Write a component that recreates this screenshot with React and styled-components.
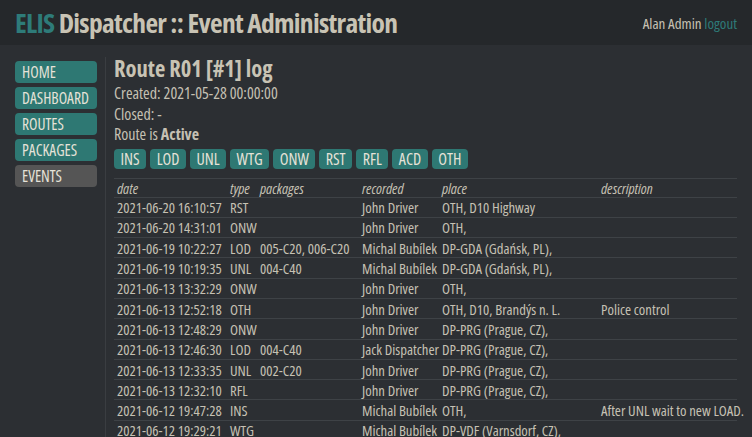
import React from "react";
import styled, { createGlobalStyle } from "styled-components";

const Global = createGlobalStyle`
  html, body {
    margin: 0;
    padding: 0;
    background: #2c2f33;
  }
  body {
    font-family: "Open Sans", "Roboto", sans-serif;
    font-stretch: 75%;
    color: #c6c1b3;
  }
`;

const Page = styled.div`
  width: 752px;
  height: 437px;
  overflow: hidden;
  background: #2c2f33;
`;

const Header = styled.header`
  height: 45px;
  background: #25282b;
  display: flex;
  align-items: center;
  justify-content: space-between;
  padding: 0 15px 0 15px;
  box-sizing: border-box;
`;

const Title = styled.h1`
  margin: 0;
  font-size: 27.5px;
  font-weight: 700;
  letter-spacing: -0.7px;
  color: #c8c3b4;
`;

const Brand = styled.span`
  color: #2e7b79;
`;

const User = styled.div`
  font-size: 15px;
  color: #c6c1b3;
`;

const Logout = styled.a`
  color: #2e7b79;
  text-decoration: none;
`;

const Body = styled.div`
  display: flex;
  height: calc(100% - 45px);
`;

const Side = styled.nav`
  width: 106px;
  box-sizing: border-box;
  margin-top: 12px;
  padding: 4px 8px 0 15px;
  border-right: 1px solid #3a3d41;
  display: flex;
  flex-direction: column;
  gap: 4px;
`;

const NavButton = styled.div`
  height: 22px;
  line-height: 22px;
  border-radius: 4px;
  padding-left: 7px;
  font-size: 15.5px;
  color: #e6e2d8;
  background: ${(p) => (p.$active ? "#555555" : "#2e7873")};
`;

const Main = styled.main`
  flex: 1;
  padding: 12px 15px 0 8px;
  min-width: 0;
`;

const Heading = styled.h2`
  margin: 0 0 2px 0;
  font-size: 22.5px;
  font-weight: 700;
  line-height: 24px;
  color: #c8c3b4;
`;

const Info = styled.div`
  font-size: 16px;
  line-height: 20.5px;
`;

const Actions = styled.div`
  display: flex;
  gap: 4px;
  margin-top: 4px;
`;

const Action = styled.div`
  height: 20px;
  line-height: 20px;
  padding: 0 6.5px;
  border-radius: 4px;
  background: #2e7873;
  color: #e6e2d8;
  font-size: 16px;
`;

const Table = styled.table`
  margin-top: 9px;
  width: 623px;
  table-layout: fixed;
  border-collapse: collapse;
  font-size: 14.7px;
  line-height: 18px;
  border-top: 1px solid #3e4246;
`;

const Th = styled.th`
  text-align: left;
  font-weight: normal;
  font-style: italic;
  padding: 0 3px;
  height: 18.5px;
  border-bottom: 1px solid #3e4246;
  width: ${(p) => p.$w || "auto"};
  box-sizing: border-box;
`;

const Td = styled.td`
  padding: 0 3px;
  height: 19.3px;
  border-bottom: 1px solid #3e4246;
  white-space: nowrap;
`;

const rows = [
  ["2021-06-20 16:10:57", "RST", "", "John Driver", "OTH, D10 Highway", ""],
  ["2021-06-20 14:31:01", "ONW", "", "John Driver", "OTH,", ""],
  ["2021-06-19 10:22:27", "LOD", "005-C20, 006-C20", "Michal Bubílek", "DP-GDA (Gdańsk, PL),", ""],
  ["2021-06-19 10:19:35", "UNL", "004-C40", "Michal Bubílek", "DP-GDA (Gdańsk, PL),", ""],
  ["2021-06-13 13:32:29", "ONW", "", "John Driver", "OTH,", ""],
  ["2021-06-13 12:52:18", "OTH", "", "John Driver", "OTH, D10, Brandýs n. L.", "Police control"],
  ["2021-06-13 12:48:29", "ONW", "", "John Driver", "DP-PRG (Prague, CZ),", ""],
  ["2021-06-13 12:46:30", "LOD", "004-C40", "Jack Dispatcher", "DP-PRG (Prague, CZ),", ""],
  ["2021-06-13 12:33:35", "UNL", "002-C20", "John Driver", "DP-PRG (Prague, CZ),", ""],
  ["2021-06-13 12:32:10", "RFL", "", "John Driver", "DP-PRG (Prague, CZ),", ""],
  ["2021-06-12 19:47:28", "INS", "", "Michal Bubílek", "OTH,", "After UNL wait to new LOAD."],
  ["2021-06-12 19:29:21", "WTG", "", "Michal Bubílek", "DP-VDF (Varnsdorf, CZ),", ""],
];

const nav = ["HOME", "DASHBOARD", "ROUTES", "PACKAGES", "EVENTS"];
const actions = ["INS", "LOD", "UNL", "WTG", "ONW", "RST", "RFL", "ACD", "OTH"];

export default () => {
  return (
    <Page>
      <Global />
      <Header>
        <Title>
          <Brand>ELIS</Brand> Dispatcher :: Event Administration
        </Title>
        <User>
          Alan Admin <Logout href="#">logout</Logout>
        </User>
      </Header>
      <Body>
        <Side>
          {nav.map((n) => (
            <NavButton key={n} $active={n === "EVENTS"}>
              {n}
            </NavButton>
          ))}
        </Side>
        <Main>
          <Heading>Route R01 [#1] log</Heading>
          <Info>Created: 2021-05-28 00:00:00</Info>
          <Info>Closed: -</Info>
          <Info>
            Route is <b>Active</b>
          </Info>
          <Actions>
            {actions.map((a) => (
              <Action key={a}>{a}</Action>
            ))}
          </Actions>
          <Table>
            <thead>
              <tr>
                <Th $w="113px">date</Th>
                <Th $w="30px">type</Th>
                <Th $w="102px">packages</Th>
                <Th $w="80px">recorded</Th>
                <Th $w="159px">place</Th>
                <Th>description</Th>
              </tr>
            </thead>
            <tbody>
              {rows.map((r, i) => (
                <tr key={i}>
                  {r.map((c, j) => (
                    <Td key={j}>{c}</Td>
                  ))}
                </tr>
              ))}
            </tbody>
          </Table>
        </Main>
      </Body>
    </Page>
  );
};
